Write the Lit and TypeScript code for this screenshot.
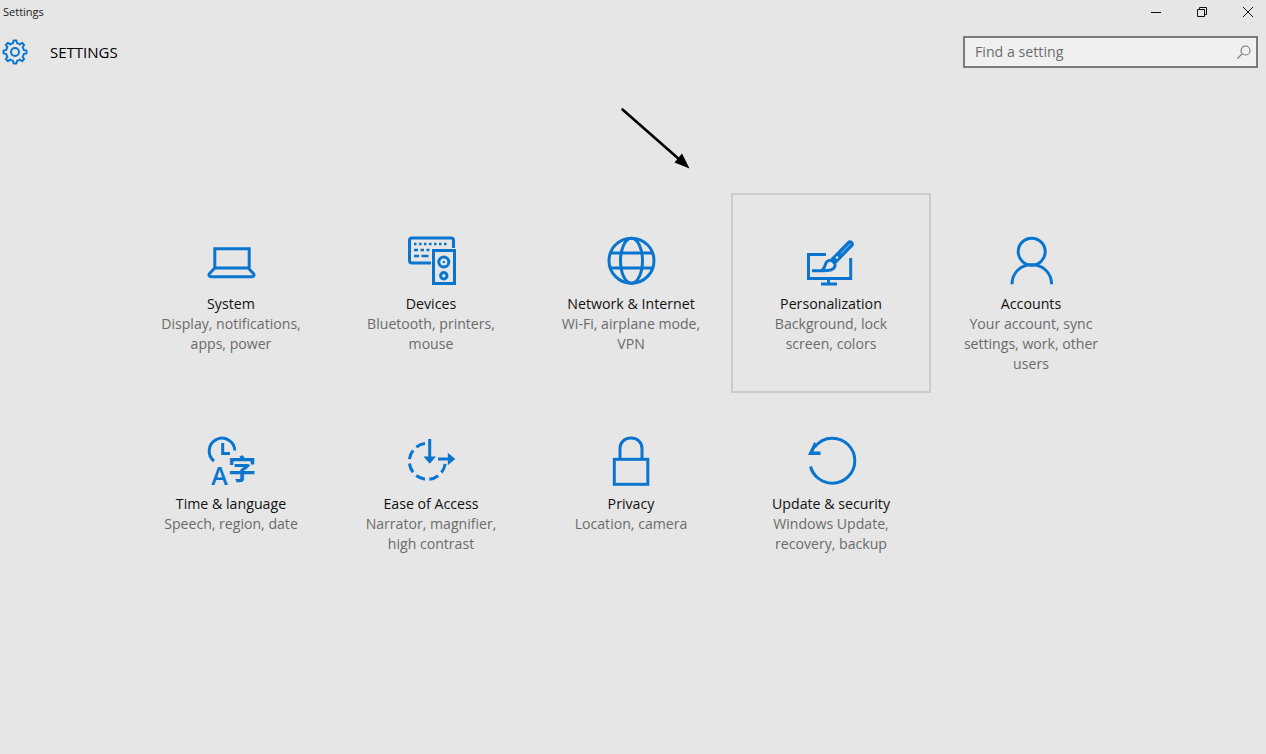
import { LitElement, html, css, svg } from "lit";
import { customElement } from "lit/decorators.js";

function gearPath(cx: number, cy: number, ro: number, ri: number, teeth: number) {
  const pts: string[] = [];
  const step = (Math.PI * 2) / teeth;
  for (let i = 0; i < teeth; i++) {
    const a = i * step - Math.PI / 2;
    const offs: [number, number][] = [
      [-0.5, ri],
      [-0.27, ri],
      [-0.17, ro],
      [0.17, ro],
      [0.27, ri],
    ];
    for (const [o, r] of offs) {
      const t = a + o * step;
      pts.push(`${(cx + Math.cos(t) * r).toFixed(2)} ${(cy + Math.sin(t) * r).toFixed(2)}`);
    }
  }
  return "M" + pts.join("L") + "Z";
}

const ICONS: Record<string, unknown> = {
  system: svg`<path d="M8.800 32V12.800h34.400V32"/><path d="M8.800 32 3.600 37.500c-1.200 1.400-.7 3.200 1.200 3.200h41.400c1.900 0 2.400-1.800 1.200-3.200L42.200 32Z"/>`,
  devices: svg`
    <path d="M25 27H6c-1.600 0-2.500-.9-2.500-2.500V4.500C3.500 2.900 4.400 2 6 2h39c1.600 0 2.500.9 2.500 2.500V12"/>
    <rect x="27.500" y="14.500" width="21" height="33" />
    <circle cx="37.800" cy="26" r="5"/>
    <circle cx="37.800" cy="39.700" r="3.200"/>
    <circle class="fill" cx="37.800" cy="26" r="1.300"/>
    <path class="thin" d="M8 8h2.500M13 8h2.500M18 8h2.500M23 8h2.500M28 8h2.500M33 8h2.500M38 8h2.500M8 14h4M14.500 14h3.500M20.500 14h3M8 20h5M15.500 20h7"/>`,
  network: svg`
    <circle cx="25.500" cy="24.700" r="22.500"/>
    <ellipse cx="25.500" cy="24.700" rx="11" ry="22.500"/>
    <path d="M4.500 17h42M4.500 32h42"/>`,
  personalization: svg`
    <path d="M20 18.500H2.500v24h42.200V22"/>
    <path d="M6 34.800h13M22.500 42.500V48M15 48h16"/>
    <path class="shaft" d="M44 8.200 28.500 24"/>
    <path class="lite" d="M44.500 7.700 35 17.500"/>
    <path d="M27 25c-3-1.700-6.500-.3-7.300 2.700-.5 2-1.700 4.500-3.200 6.300 5 .8 9.500.3 11.500-2 1.600-2 1.500-5.300-1-7Z"/>
    <circle class="hole" cx="31" cy="21.500" r="1.300"/>`,
  accounts: svg`
    <circle cx="25.700" cy="15.700" r="13.500"/>
    <path d="M6 48.300c0-11.500 8.500-19.500 19.700-19.500S45.600 36.800 45.600 48.300"/>`,
  time: svg`
    <path d="M8 25A12.800 12.800 0 1 1 28.800 14.500"/>
    <path d="M16.700 7v10.500H24"/>
    <text class="glyph a" x="13.500" y="49">A</text>
    <text class="glyph z" x="22" y="44">字</text>`,
  ease: svg`
    <path class="dash" d="M19 7.500A18 18 0 1 0 39.200 27.500"/>
    <path d="M23.700 3v20M32 23h12"/>
    <path class="fill" d="M17.500 20.500h12.500L23.700 27.800ZM41.800 16.800 49.300 23 41.800 29.200Z"/>`,
  privacy: svg`
    <rect x="8.300" y="23.300" width="33.500" height="25" />
    <path d="M14 23V12.500C14 6 18.900 2 25 2s11 4 11 10.500V23"/>`,
  update: svg`
    <path d="M8.500 11.500C12.500 5.800 18.900 2.200 26.300 2.200 38.700 2.200 48.800 12.300 48.800 24.700S38.700 47.200 26.300 47.200C15.800 47.200 7 40 4.500 30.500"/>
    <path class="fill" d="M8.200 6 2 19h12.500v-3.500H7.500L11 8Z"/>`,
};

interface Tile { id: string; title: string; lines: string[]; selected?: boolean }

const TILES: Tile[] = [
  { id: "system", title: "System", lines: ["Display, notifications,", "apps, power"] },
  { id: "devices", title: "Devices", lines: ["Bluetooth, printers,", "mouse"] },
  { id: "network", title: "Network & Internet", lines: ["Wi-Fi, airplane mode,", "VPN"] },
  { id: "personalization", title: "Personalization", lines: ["Background, lock", "screen, colors"], selected: true },
  { id: "accounts", title: "Accounts", lines: ["Your account, sync", "settings, work, other", "users"] },
  { id: "time", title: "Time & language", lines: ["Speech, region, date"] },
  { id: "ease", title: "Ease of Access", lines: ["Narrator, magnifier,", "high contrast"] },
  { id: "privacy", title: "Privacy", lines: ["Location, camera"] },
  { id: "update", title: "Update & security", lines: ["Windows Update,", "recovery, backup"] },
];

@customElement("app-root")
export class AppRoot extends LitElement {
  static styles = css`
    :host {
      display: block;
      width: 1266px;
      height: 754px;
      background: #e6e6e6;
      position: relative;
      overflow: hidden;
      font-family: "Open Sans", "Noto Sans", sans-serif;
      color: #111;
    }
    .titlebar {
      height: 24px;
      display: flex;
      align-items: center;
      padding-left: 3px;
      font-size: 11px;
      color: #222;
    }
    .title-text { flex: 1; margin-bottom: 2px; }
    .win { display: flex; gap: 10px; }
    .win svg { width: 36px; height: 24px; display: block; fill: none; stroke: #111; stroke-width: 1; }
    .header {
      height: 56px;
      display: flex;
      align-items: center;
      padding: 0 8px 0 2px;
    }
    .gear { width: 26px; height: 26px; display: block; fill: none; stroke: #0a75cf; stroke-width: 1.9; stroke-linejoin: round; }
    .app-name { margin-left: 22px; font-size: 15px; font-weight: 500; flex: 1; margin-bottom: 1px; color: #000; }
    .search {
      box-sizing: border-box;
      width: 295px;
      height: 32px;
      border: 2px solid #7a7a7a;
      background: #f0f0f0;
      display: flex;
      align-items: center;
      justify-content: space-between;
      padding: 0 4px 0 10px;
      font-size: 14.200px;
      color: #6c6c6c;
    }
    .search span { margin-bottom: 2px; }
    .search svg { width: 16px; height: 16px; fill: none; stroke: #777; stroke-width: 1.1; }
    .grid {
      display: grid;
      grid-template-columns: repeat(5, 200px);
      grid-auto-rows: 200px;
      padding: 113px 0 0 131px;
    }
    .tile {
      box-sizing: border-box;
      border: 2px solid transparent;
      padding-top: 41px;
      display: flex;
      flex-direction: column;
      align-items: center;
      text-align: center;
    }
    .tile.selected { border-color: #cbcbcb; }
    .icon {
      width: 50px;
      height: 50px;
      display: block;
      fill: none;
      stroke: #0a75cf;
      stroke-width: 3;
      overflow: visible;
    }
    .icon .thin { stroke-width: 2.6; }
    .icon .fill { fill: #0a75cf; stroke: none; }
    .icon .shaft { stroke-width: 7.500; stroke-linecap: round; }
    .icon .lite { stroke: #5fa5dd; stroke-width: 1.200; }
    .icon .hole { fill: #e6e6e6; stroke: none; }
    .icon .dash { stroke-dasharray: 9.500 4.500; }
    .icon .glyph { fill: #0a75cf; stroke: none; text-anchor: middle; }
    .icon .a { font: 600 25px "Open Sans", sans-serif; }
    .icon .z { font: 700 28px "Noto Sans CJK SC", sans-serif; text-anchor: start; }
    .name { margin-top: 8px; font-size: 14.200px; line-height: 20px; color: #111; }
    .sub { font-size: 14.100px; line-height: 20px; color: #6b6b6b; }
    .arrow { position: absolute; left: 610px; top: 100px; width: 90px; height: 75px; }
  `;

  render() {
    return html`
      <div class="titlebar">
        <span class="title-text">Settings</span>
        <div class="win">
          <svg viewBox="0 0 36 24"><path d="M13 12.500h10"/></svg>
          <svg viewBox="0 0 36 24"><path d="M13.500 9.500h7v7h-7zM15.500 9.500v-2h7v7h-2"/></svg>
          <svg viewBox="0 0 36 24"><path d="M13 7l10 10M23 7 13 17"/></svg>
        </div>
      </div>
      <div class="header">
        <svg class="gear" viewBox="0 0 26 26">
          <path d=${gearPath(13, 13, 11.6, 9, 8)} />
          <circle cx="13" cy="13" r="4" />
        </svg>
        <span class="app-name">SETTINGS</span>
        <div class="search">
          <span>Find a setting</span>
          <svg viewBox="0 0 16 16"><circle cx="9.500" cy="6.500" r="4.500"/><path d="M6.300 9.700 1.500 14.500"/></svg>
        </div>
      </div>
      <div class="grid">
        ${TILES.map(
          (t) => html`
            <div class="tile ${t.selected ? "selected" : ""}">
              <svg class="icon" viewBox="0 0 50 50">${ICONS[t.id]}</svg>
              <div class="name">${t.title}</div>
              <div class="sub">${t.lines.map((l) => html`<div>${l}</div>`)}</div>
            </div>
          `
        )}
      </div>
      <svg class="arrow" viewBox="0 0 90 75">
        <path d="M12.500 9.500 70 60" stroke="#000" stroke-width="2.600" stroke-linecap="round" fill="none"/>
        <path d="M79.500 68.500 64.500 62.500 72 53.500Z" fill="#000"/>
      </svg>
    `;
  }
}
